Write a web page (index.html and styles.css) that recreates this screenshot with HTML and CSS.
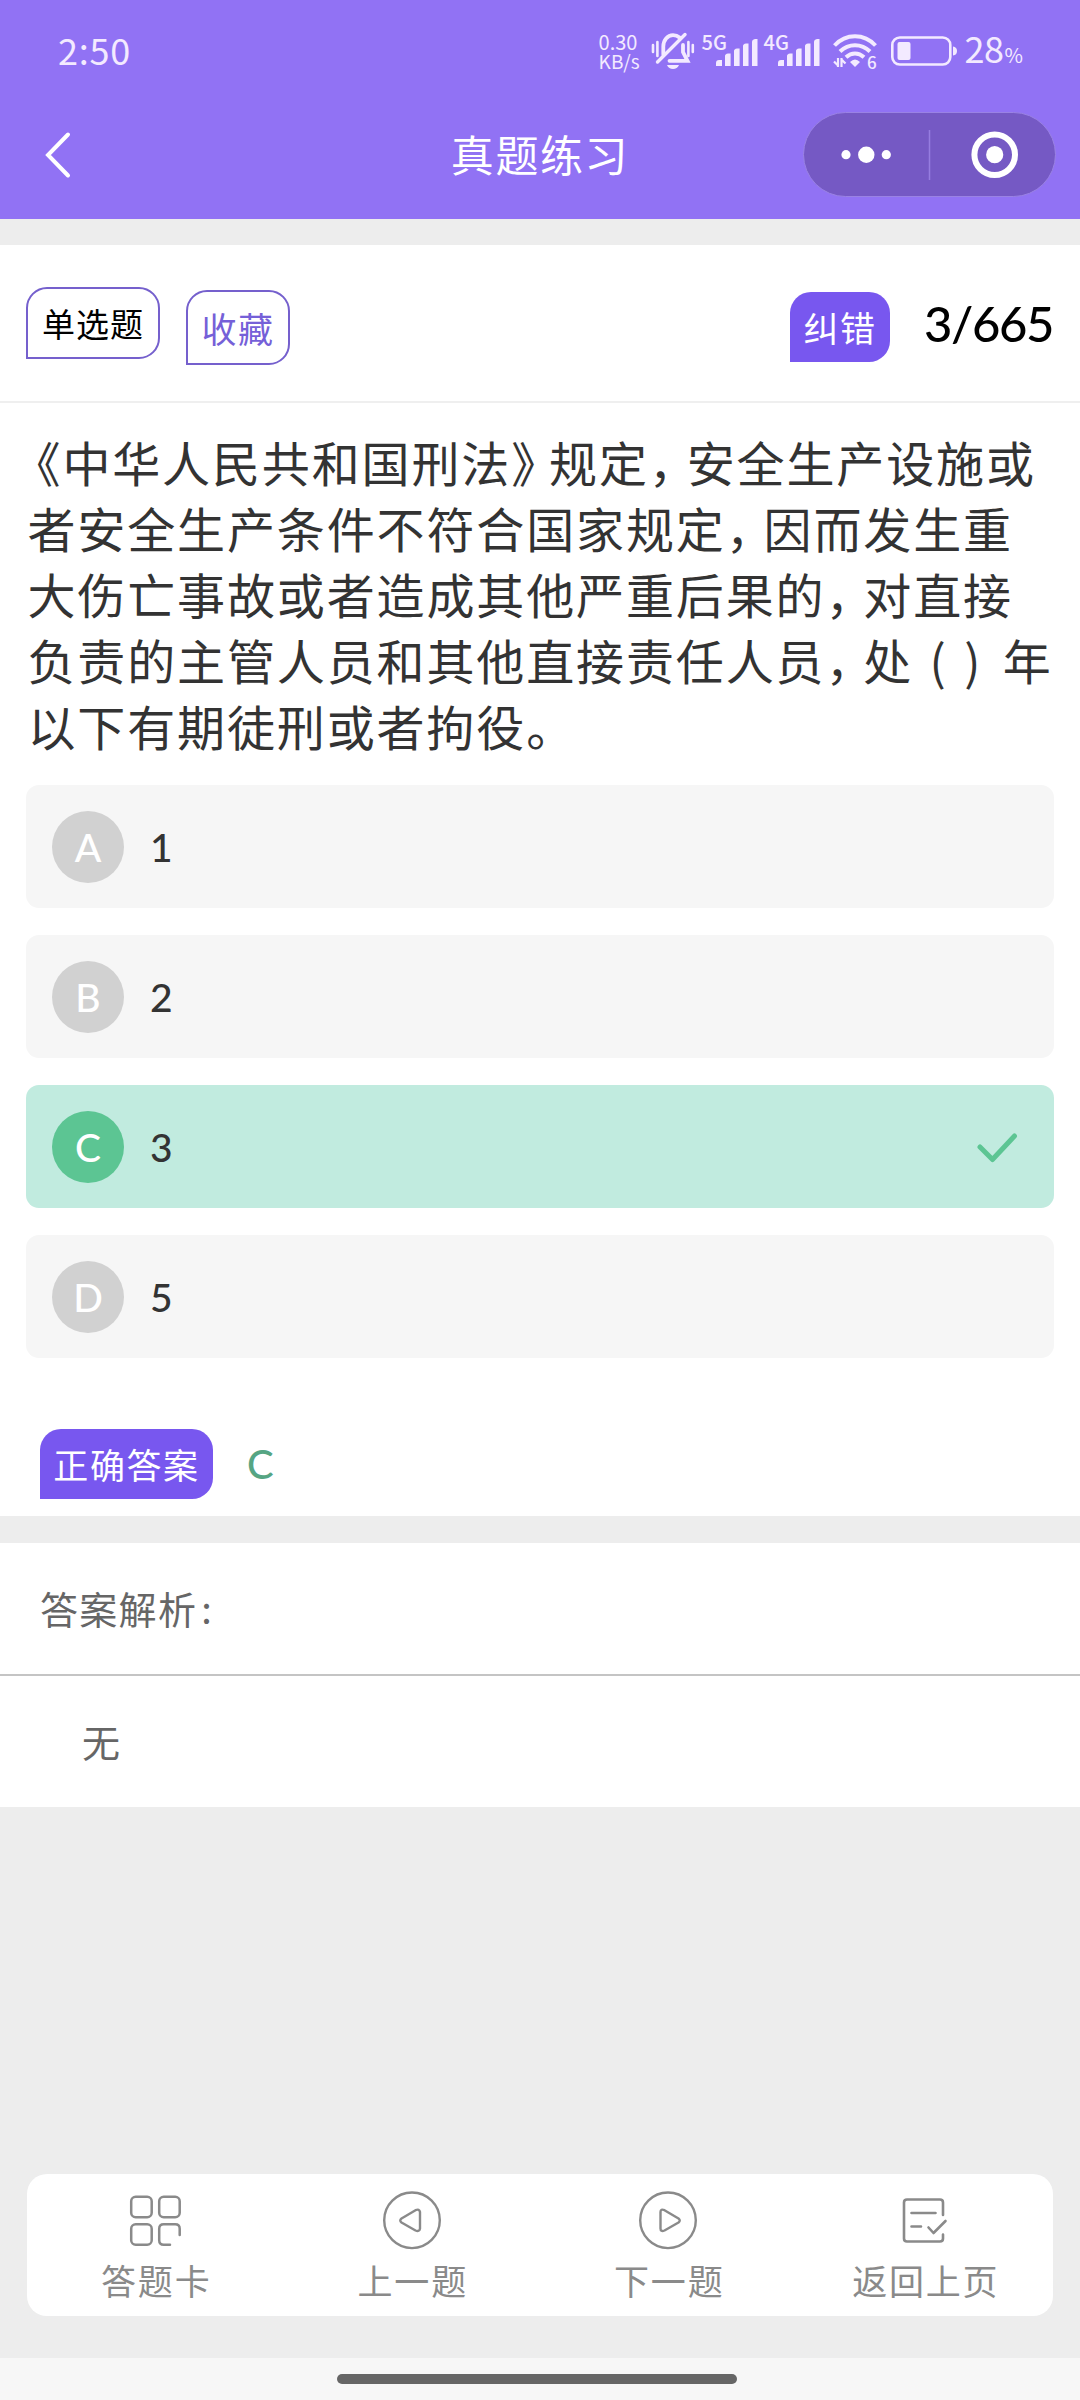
FILE: index.html
```html
<!DOCTYPE html>
<html lang="zh-CN">
<head>
<meta charset="utf-8">
<title>真题练习</title>
<link rel="stylesheet" href="styles.css">
</head>
<body>
<header class="header">
  <div class="status">
    <span class="time">2:50</span>
    <div class="status-right">
      <span class="speed"><span>0.30</span><span>KB/s</span></span>
      <svg class="bell" width="44" height="38" viewBox="0 0 44 38" fill="none" stroke="currentColor" stroke-width="3.4" stroke-linecap="round">
        <path d="M2 13v7M6.4 10v14M37.4 10v14M41.8 13v7" stroke-width="2.6"/>
        <path d="M12.3 22.500V14.500C12.300 8 16.500 3.200 22 3.200C24.500 3.200 26.800 4 28.500 5.500" stroke-width="3.800"/>
        <path d="M32 13V20L36.500 28.800H18.500" stroke-width="3.800"/>
        <path d="M34 2.500L6.500 30"/>
        <path d="M16 33h12c-1 2.600-3.300 4-6 4s-5-1.400-6-4z" fill="currentColor" stroke="none"/>
      </svg>
      <span class="net net-5g">
        <span class="net-label">5G</span>
        <svg width="43" height="28" viewBox="0 0 43 28" fill="currentColor"><path d="M0 27v-3q0-3 3-3h3v6zM9 27V17q0-2 3-2.500h2.600V27zM18 27V12q0-2 3-2.500h2.600V27zM27 27V7q0-2 3-2.500h2.500V27zM36 27V3q0-2.500 3-3h2.500V27z"/></svg>
      </span>
      <span class="net net-4g">
        <span class="net-label">4G</span>
        <svg width="43" height="28" viewBox="0 0 43 28" fill="currentColor"><path d="M0 27v-3q0-3 3-3h3v6zM9 27V17q0-2 3-2.500h2.600V27zM18 27V12q0-2 3-2.500h2.600V27zM27 27V7q0-2 3-2.500h2.500V27zM36 27V3q0-2.500 3-3h2.500V27z"/></svg>
      </span>
      <span class="wifi">
        <svg width="44" height="34" viewBox="0 0 44 34" fill="none" stroke="currentColor" stroke-width="4">
          <path d="M1.500 11.500C13 -.8 31 -.8 42.500 11.500M7 17.500C15.500 9 28.500 9 37 17.500M13 23.300C18.500 18.200 25.500 18.200 31 23.300"/>
          <path d="M17 28q5-5 10 0l-5 5z" fill="currentColor" stroke="none"/>
          <path d="M1 27.500l3.500 3.500M5 24v9M8.500 33v-9M9 26l3.500 3.500" stroke-width="2.200"/>
        </svg>
        <span class="wifi-gen">6</span>
      </span>
      <svg class="battery" width="67" height="30" viewBox="0 0 67 30" fill="none">
        <rect x="1.300" y="1.500" width="58" height="27" rx="7.500" stroke="currentColor" stroke-width="2.600"/>
        <rect x="6.500" y="6" width="13" height="18" rx="2" fill="currentColor"/>
        <path d="M62 10.500q4 .5 4 4.500t-4 4.500z" fill="currentColor"/>
      </svg>
      <span class="percent">28<small>%</small></span>
    </div>
  </div>
  <div class="titlebar">
    <svg class="back" width="28" height="50" viewBox="0 0 28 50" fill="none" stroke="#fff" stroke-width="4" stroke-linecap="round"><path d="M24 4.500L4 25L24 45.500"/></svg>
    <h1 class="title">真题练习</h1>
    <div class="capsule">
      <svg width="251" height="83" viewBox="0 0 251 83" fill="#fff">
        <circle cx="42" cy="41.700" r="4.600"/><circle cx="62.300" cy="41.700" r="8.200"/><circle cx="82.300" cy="41.700" r="4.600"/>
        <path d="M125.500 17v50" stroke="#967de0" stroke-width="1.500"/>
        <circle cx="190.700" cy="41.700" r="20.300" fill="none" stroke="#fff" stroke-width="6"/><circle cx="190.700" cy="41.700" r="8.600"/>
      </svg>
    </div>
  </div>
</header>

<main class="content">
  <section class="question-card">
    <div class="toolbar">
      <span class="tag tag-type">单选题</span>
      <span class="tag tag-fav">收藏</span>
      <span class="tag tag-solid tag-fix">纠错</span>
      <span class="counter">3/665</span>
    </div>
    <p class="question"><span class="open">《</span>中华人民共和国刑法<span class="close">》</span>规定<span class="comma">，</span>安全生产设施或<br>者安全生产条件不符合国家规定<span class="comma">，</span>因而发生重<br>大伤亡事故或者造成其他严重后果的<span class="comma">，</span>对直接<br>负责的主管人员和其他直接责任人员<span class="comma">，</span>处<span class="blank">( )</span>年<br>以下有期徒刑或者拘役。</p>
    <ul class="options">
      <li class="option"><span class="letter">A</span><span>1</span></li>
      <li class="option"><span class="letter">B</span><span>2</span></li>
      <li class="option correct"><span class="letter">C</span><span>3</span>
        <svg class="check" width="42" height="32" viewBox="0 0 42 32" fill="none" stroke="#5cc593" stroke-width="5" stroke-linecap="round" stroke-linejoin="round"><path d="M4 16L16.500 28.500L38.500 5"/></svg>
      </li>
      <li class="option"><span class="letter">D</span><span>5</span></li>
    </ul>
    <div class="answer"><span class="tag tag-solid">正确答案</span><span class="answer-value">C</span></div>
  </section>
  <section class="analysis">
    <h2 class="analysis-title">答案解析<span class="colon">:</span></h2>
    <p class="analysis-body">无</p>
  </section>
</main>

<nav class="nav">
  <a class="nav-item">
    <svg width="60" height="60" viewBox="0 0 60 60" fill="none" stroke="currentColor" stroke-width="2.500" stroke-linecap="round"><rect x="6.200" y="6.700" width="20.500" height="20.500" rx="4.500"/><rect x="34.200" y="6.700" width="20.500" height="20.500" rx="4.500"/><rect x="6.200" y="34.200" width="20.500" height="20.500" rx="4.500"/><path d="M54.700 45V38.700q0-4.500-4.500-4.500H38.700q-4.500 0-4.500 4.500V50.200q0 4.500 4.500 4.500H45"/></svg>
    <span>答题卡</span>
  </a>
  <a class="nav-item">
    <svg width="60" height="60" viewBox="0 0 60 60" fill="none" stroke="currentColor" stroke-width="2.400" stroke-linejoin="round"><circle cx="30" cy="30.300" r="27.800"/><path d="M19.500 28.500L33.500 20.200Q37.500 18.500 38 22V38.500Q37.500 42 33.500 40.500L19.500 32.500Q17 30.500 19.500 28.500z"/></svg>
    <span>上一题</span>
  </a>
  <a class="nav-item">
    <svg width="60" height="60" viewBox="0 0 60 60" fill="none" stroke="currentColor" stroke-width="2.400" stroke-linejoin="round"><circle cx="30" cy="30.300" r="27.800"/><path d="M40.500 28.500L26.500 20.200Q22.500 18.500 22.500 22V38.500Q22.500 42 26.500 40.500L40.500 32.500Q43 30.500 40.500 28.500z"/></svg>
    <span>下一题</span>
  </a>
  <a class="nav-item">
    <svg width="60" height="60" viewBox="0 0 60 60" fill="none" stroke="currentColor" stroke-width="2.600" stroke-linecap="round" stroke-linejoin="round"><path d="M48 25V12.500q0-3-3-3H12q-3 0-3 3v36q0 3 3 3H45q3 0 3-3V44.500M16.500 23H40.500M16.500 36.500H26M33.500 37.500L38.500 43L50.500 31"/></svg>
    <span>返回上页</span>
  </a>
</nav>
<footer class="gesture"><span class="gesture-bar"></span></footer>
</body>
</html>
```

FILE: styles.css
```css
* { box-sizing: border-box; margin: 0; padding: 0; }

body {
  width: 1080px;
  height: 2400px;
  display: flex;
  flex-direction: column;
  background: #ededed;
  font-family: "Noto Sans CJK SC", sans-serif;
  font-weight: 400;
  overflow: hidden;
}

svg { display: block; flex: none; }

/* Header */
.header { height: 219px; background: #9172f4; color: #fff; }

.status {
  height: 101px;
  padding: 0 58px 0 58px;
  display: flex;
  justify-content: space-between;
  align-items: center;
  color: #f3eaff;
}
.time { font-size: 36px; line-height: 40px; letter-spacing: 0.8px; margin-top: -4px; }
.status-right { display: flex; align-items: center; }
.speed {
  width: 52px;
  display: flex;
  flex-direction: column;
  font-size: 20px;
  line-height: 19px;
  white-space: nowrap;
}
.speed span:last-child { font-size: 19px; }
.net { width: 57px; height: 31px; display: flex; margin-left: 7px; }
.net-label { width: 14px; font-size: 20px; line-height: 20px; font-weight: 500; margin-top: -3px; white-space: nowrap; }
.net svg { margin-top: 4px; }
.net-4g { margin-left: 5px; }
.wifi { position: relative; margin-left: 12px; }
.wifi-gen { position: absolute; right: 0; top: 19px; padding-left: 1px; font-size: 17px; line-height: 17px; font-weight: 500; background: #9172f4; }
.battery { margin-left: 14px; }
.percent { margin-left: 7px; font-size: 36px; line-height: 40px; letter-spacing: -0.5px; margin-top: 0; }
.percent small { font-size: 20px; margin-left: 1px; letter-spacing: -1px; }

.titlebar {
  height: 107px;
  padding: 0 24px 0 44px;
  display: grid;
  grid-template-columns: 253px 1fr 253px;
  align-items: center;
}
.title { font-size: 43px; line-height: 60px; font-weight: 400; letter-spacing: 1.600px; text-align: center; margin: -3px 0 0 -20px; }
.capsule { width: 253px; height: 85px; border: 1px solid #9a82e4; border-radius: 43px; background: #7559c4; }

/* Question card */
.question-card { margin-top: 26px; height: 1271px; background: #fff; }
.toolbar {
  height: 158px;
  padding: 42px 26px 0;
  display: flex;
  align-items: flex-start;
  border-bottom: 2px solid #efefef;
}
.tag {
  display: flex;
  align-items: center;
  justify-content: center;
  border-radius: 21px 21px 21px 0;
  font-size: 35px;
  line-height: 50px;
  letter-spacing: 1.600px;
  white-space: nowrap;
}
.tag-type { width: 134px; height: 72px; border: 2px solid #7560cd; font-size: 33px; letter-spacing: 1px; color: #000; }
.tag-fav { width: 104px; height: 75px; margin: 3px 0 0 26px; border: 2px solid #7560cd; color: #7560d8; }
.tag-solid { height: 70px; background: #7857ef; color: #fff; }
.tag-fix { width: 100px; margin: 5px 0 0 auto; }
.counter { width: 130px; margin: 6px 0 0 34px; font-family: "Lato", sans-serif; font-weight: 500; font-size: 49px; line-height: 60px; letter-spacing: -1.400px; color: #000; }

.question { height: 357px; margin-bottom: 25px; padding: 25px 0 0 27.500px; font-size: 48px; line-height: 66px; letter-spacing: 1.870px; color: #333; white-space: nowrap; text-spacing-trim: space-all; }
.open, .close, .comma { font-feature-settings: "halt"; }
.open { margin-left: 9px; }
.close, .comma { margin-right: 12px; }
.blank { display: inline-block; width: 89.500px; padding-right: 4px; text-align: center; word-spacing: 4px; }

.options { padding: 0 26px; display: grid; gap: 27px; list-style: none; }
.option {
  height: 123px;
  padding: 0 36px 0 26px;
  display: flex;
  align-items: center;
  gap: 26px;
  border-radius: 13px;
  background: #f6f6f6;
  font-family: "Lato", sans-serif;
  font-weight: 500;
  font-size: 39px;
  line-height: 48px;
  color: #333;
}
.letter { width: 72px; height: 72px; border-radius: 50%; background: #d1d1d1; color: #fff; line-height: 72px; text-align: center; }
.correct { background: #c1ebdf; }
.correct .letter { background: #5cc593; }
.check { margin-left: auto; }

.answer { padding: 71px 40px 0; display: flex; align-items: center; gap: 34px; }
.answer .tag { width: 173px; }
.answer-value { font-family: "Lato", sans-serif; font-weight: 500; font-size: 40px; line-height: 48px; color: #56a583; }

/* Analysis */
.analysis { margin-top: 27px; height: 264px; background: #fff; color: #666; }
.analysis-title { height: 133px; padding: 35px 40px 0; border-bottom: 2px solid #c4c4c4; font-size: 38px; line-height: 60px; font-weight: 400; letter-spacing: 1.300px; }
.colon { margin-left: 4px; }
.analysis-body { padding: 35px 82px 0; font-size: 38px; line-height: 60px; }

/* Bottom navigation */
.nav {
  width: 1026px;
  height: 142px;
  margin: auto 27px 42px;
  display: grid;
  grid-template-columns: repeat(4, 1fr);
  border-radius: 20px;
  background: #fff;
  color: #8a8a8a;
}
.nav-item { display: flex; flex-direction: column; align-items: center; padding-top: 16px; font-size: 35px; line-height: 50px; letter-spacing: 1.800px; }
.nav-item span { margin: 5px 0 0 2px; }

.gesture { height: 42px; display: flex; justify-content: center; padding-top: 16px; background: #f7f7f7; }
.gesture-bar { width: 400px; height: 10px; margin-right: 6px; border-radius: 5px; background: #666; }
```
